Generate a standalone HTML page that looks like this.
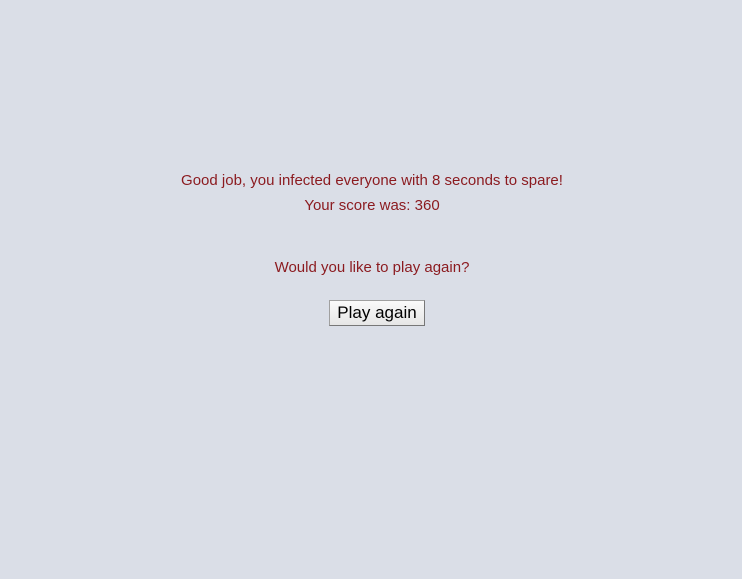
<!DOCTYPE html>
<html><head><style>
html,body{margin:0;padding:0;background:#dadee7;width:742px;height:579px;overflow:hidden;font-family:"Liberation Sans",sans-serif;}
.t{position:absolute;left:0;width:744px;text-align:center;color:#8b1a1f;font-size:15px;line-height:18px;}
.b{position:absolute;left:329px;top:300px;width:96px;height:26px;box-sizing:border-box;border:1px solid #a0a0a0;border-right-color:#777;border-bottom-color:#777;background:linear-gradient(#fafafa,#e6e6e6);font-size:17px;color:#000;text-align:center;line-height:24px;}
</style></head><body>
<div class="t" style="top:172px">Good job, you infected everyone with 8 seconds to spare!</div>
<div class="t" style="top:197px">Your score was: 360</div>
<div class="t" style="top:259px">Would you like to play again?</div>
<div class="b">Play again</div>
</body></html>
